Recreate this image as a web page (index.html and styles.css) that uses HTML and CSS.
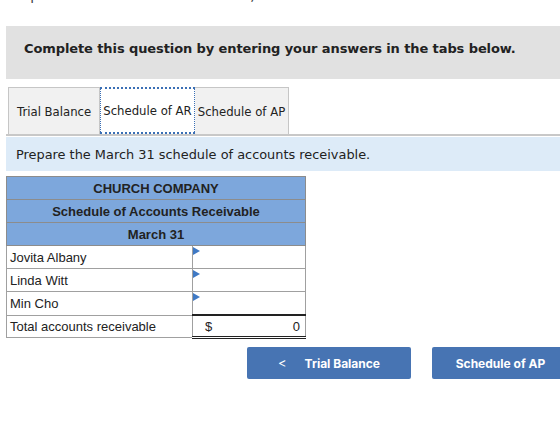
FILE: index.html
```html
<!DOCTYPE html>
<html lang="en">
<head>
    <meta charset="UTF-8">
    <title>Schedule of Accounts Receivable</title>
    <link rel="stylesheet" href="styles.css">
</head>
<body>
<p class="intro">Prepare the March 31 trial balance, schedule of accounts receivable and schedule of accounts payable.</p>

<div class="notice">Complete this question by entering your answers in the tabs below.</div>

<div class="tabs">
    <button class="tab">Trial Balance</button>
    <button class="tab active">Schedule of AR</button>
    <button class="tab">Schedule of AP</button>
</div>

<div class="prompt">Prepare the March 31 schedule of accounts receivable.</div>

<table class="sheet">
    <thead>
    <tr><th colspan="2">CHURCH COMPANY</th></tr>
    <tr><th colspan="2">Schedule of Accounts Receivable</th></tr>
    <tr><th colspan="2">March 31</th></tr>
    </thead>
    <tbody>
    <tr><td class="name">Jovita Albany</td><td class="amt flag"></td></tr>
    <tr><td class="name">Linda Witt</td><td class="amt flag"></td></tr>
    <tr><td class="name">Min Cho</td><td class="amt flag"></td></tr>
    <tr class="total"><td class="name">Total accounts receivable</td><td class="amt"><span class="cur">$</span>0</td></tr>
    </tbody>
</table>

<div class="nav">
    <button class="nav-btn prev"><span class="chev">&lt;</span>Trial Balance</button>
    <button class="nav-btn next">Schedule of AP</button>
</div>
</body>
</html>
```

FILE: styles.css
```css
body {
    margin: 0;
    padding: 0 0 0 6px;
    background: #fff;
    color: #222;
    font-family: "DejaVu Sans", Verdana, sans-serif;
    overflow: hidden;
}
.intro {
    margin: -13px 0 0 2px;
    font-size: 14px;
    line-height: 16px;
    color: #444;
    white-space: nowrap;
}
.notice {
    margin-top: 23px;
    height: 53px;
    padding-left: 18px;
    background: #e1e1e1;
    font-size: 13px;
    letter-spacing: -0.1px;
    font-weight: bold;
    line-height: 45px;
    white-space: nowrap;
}
.tabs {
    display: flex;
    margin-top: 8px;
    padding-left: 2px;
    border-bottom: 2px solid #c8c8c8;
}
.tab {
    height: 47px;
    padding: 1px 8px 0;
    border: 1px solid #c6c6c6;
    border-bottom: none;
    background: #f1f1f1;
    font-family: "DejaVu Sans", Verdana, sans-serif;
    font-size: 11.7px;
    color: #222;
}
.tab + .tab {
    border-left: none;
}
.tab.active {
    background: #fff;
    padding: 1px 2px 0;
    border: 1px dotted #3a6fb5;
    border-width: 2px 1px;
}
.tab:last-child {
    padding: 1px 3px 0;
}
.prompt {
    height: 34px;
    margin-top: 1px;
    padding-left: 10px;
    background: #ddebf8;
    font-size: 12.9px;
    line-height: 36px;
    white-space: nowrap;
}
.sheet {
    width: 300px;
    margin-top: 5px;
    border-collapse: collapse;
    font-family: "Liberation Sans", Arial, sans-serif;
    font-size: 13px;
}
.sheet th {
    height: 22px;
    padding: 0;
    background: #7da7dc;
    border: 1px solid #8c8c8c;
    color: #222;
}
.sheet td {
    height: 22px;
    padding: 0 3px;
    border: 1px solid #a0a0a0;
}
.sheet td.name {
    width: 179px;
}
.amt {
    position: relative;
}
.flag::before {
    content: "";
    position: absolute;
    left: 0;
    top: 1px;
    border-left: 7px solid #3f79c4;
    border-top: 4px solid transparent;
    border-bottom: 4px solid transparent;
}
.total td {
    height: 20px;
}
.total td.amt {
    padding: 0 5px 0 12px;
    text-align: right;
    border-top: 2px solid #222;
    border-bottom: 3px double #222;
}
.cur {
    float: left;
}
.nav {
    display: flex;
    gap: 21px;
    margin-top: 8px;
    padding-left: 241px;
}
.nav-btn {
    flex: none;
    height: 32px;
    border: none;
    border-radius: 2px;
    background: #4774b3;
    color: #fff;
    font-family: Inter, "Open Sans", sans-serif;
    font-size: 12px;
    font-weight: bold;
}
.prev {
    width: 164px;
}
.next {
    width: 137px;
}
.chev {
    margin-right: 18px;
    font-weight: normal;
    font-size: 13px;
}
```
